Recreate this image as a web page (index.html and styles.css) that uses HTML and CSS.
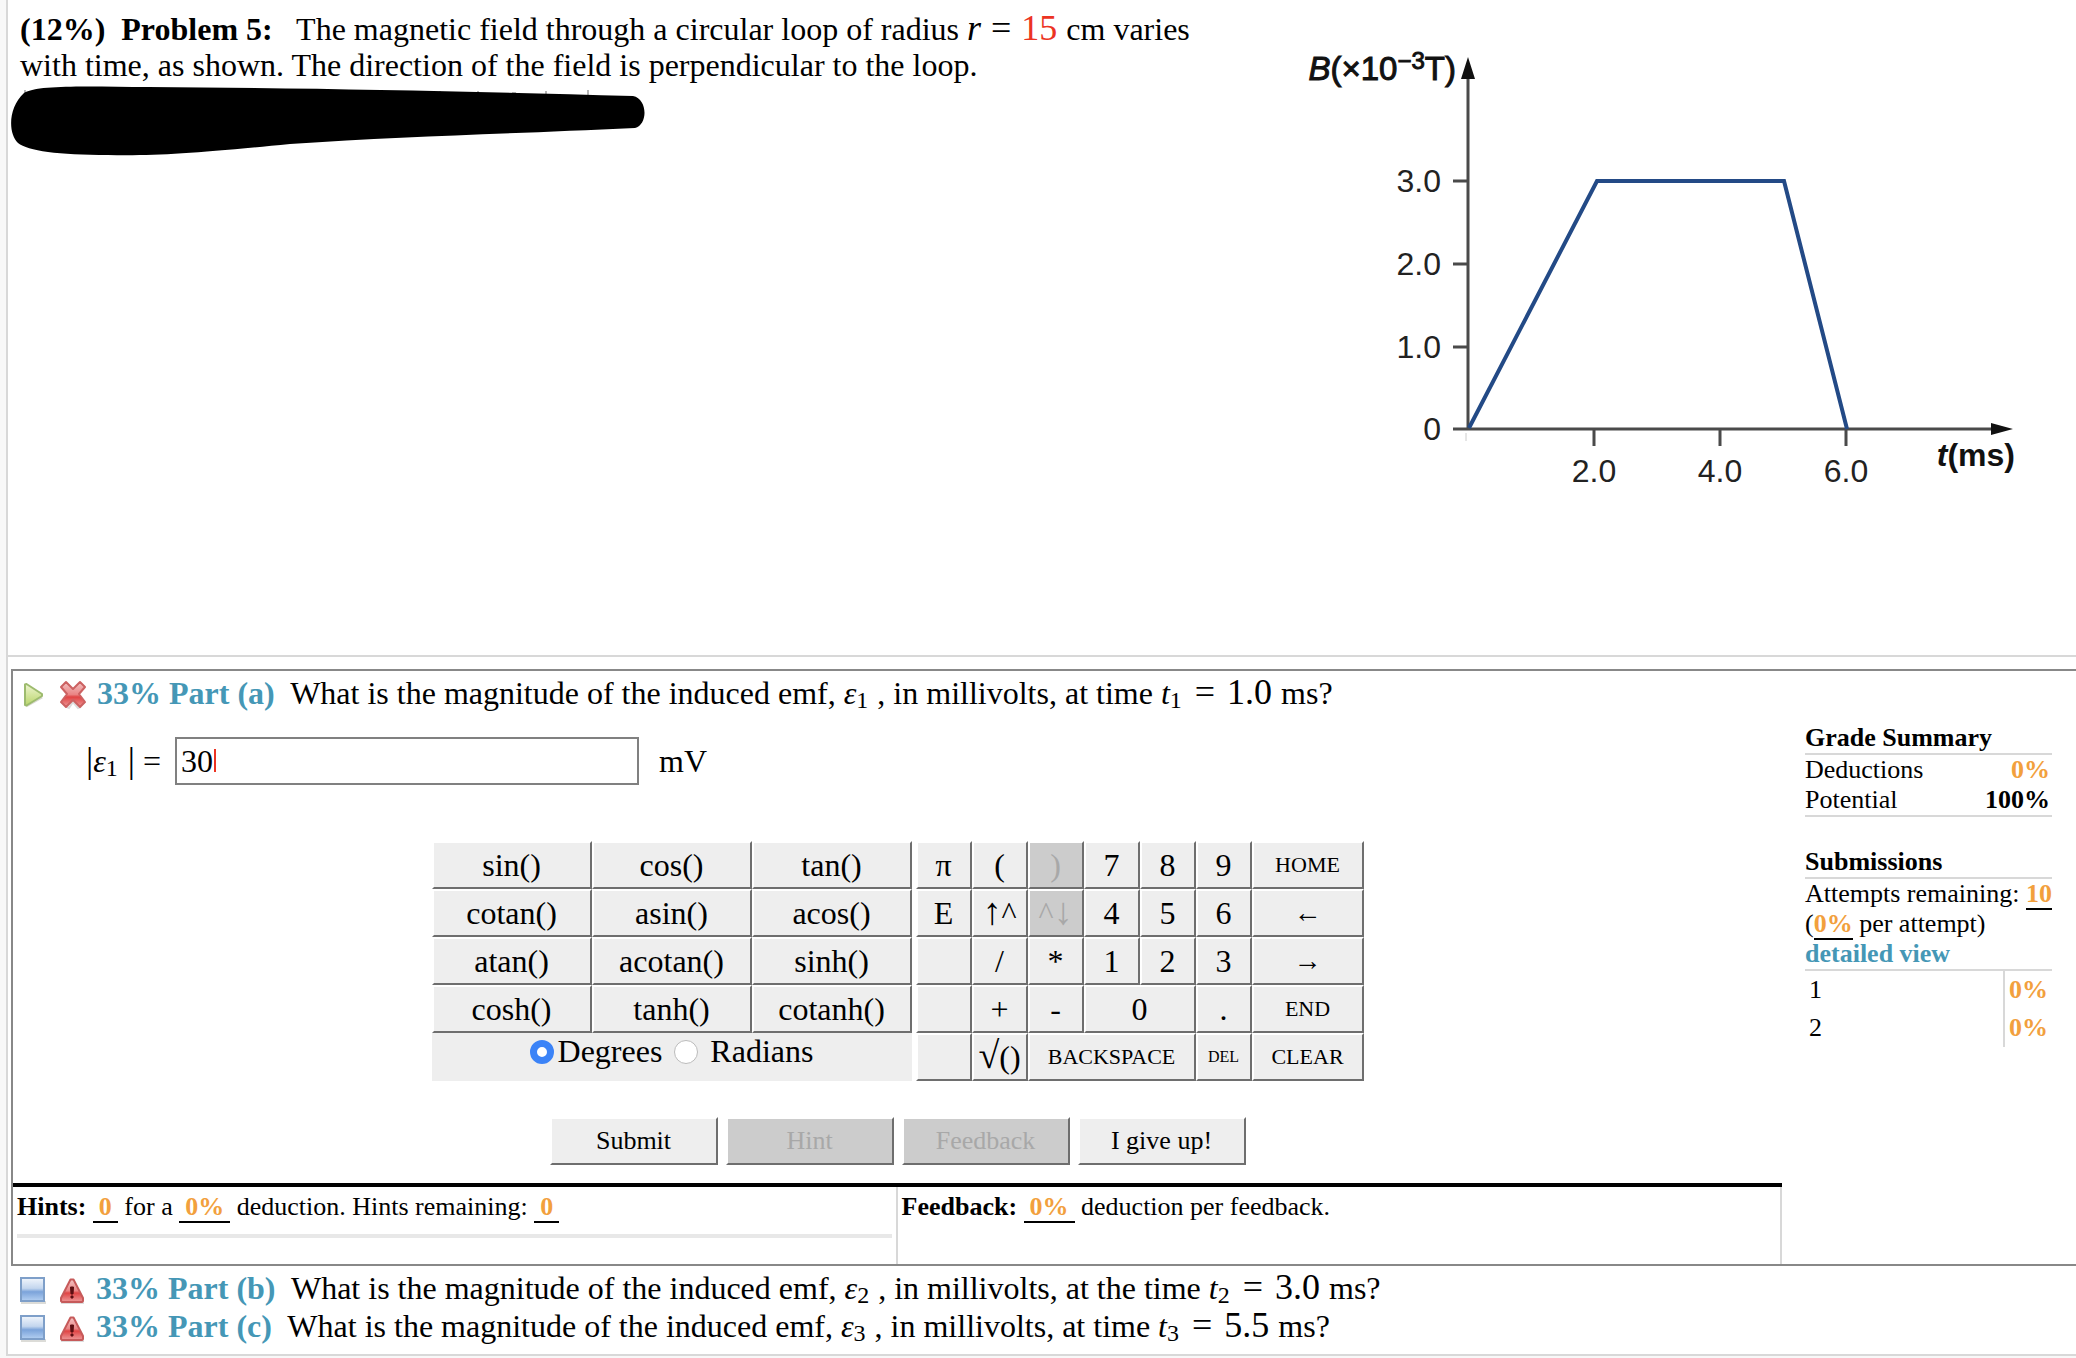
FILE: index.html
```html
<!DOCTYPE html>
<html lang="en">

<head>
    <meta charset="UTF-8">
    <meta name="viewport" content="width=device-width, initial-scale=1.0">
    <title>Problem 5</title>
    <link rel="stylesheet" href="styles.css">
</head>

<body>
    <!-- shared icons -->
    <svg class="defs" width="0" height="0" aria-hidden="true">
        <defs>
            <linearGradient id="green" x1="0" y1="0" x2="0" y2="1">
                <stop offset="0" stop-color="#eef4d0" />
                <stop offset="1" stop-color="#b9d66b" />
            </linearGradient>
            <linearGradient id="red" x1="0" y1="0" x2="0" y2="1">
                <stop offset="0" stop-color="#f3c4c4" />
                <stop offset="0.5" stop-color="#ea8484" />
                <stop offset="0.6" stop-color="#e04444" />
                <stop offset="1" stop-color="#ee9a9a" />
            </linearGradient>
            <linearGradient id="blue" x1="0" y1="0" x2="0" y2="1">
                <stop offset="0" stop-color="#f2f6fc" />
                <stop offset="0.45" stop-color="#c3d6ee" />
                <stop offset="0.6" stop-color="#7ba3da" />
                <stop offset="1" stop-color="#b4d0f2" />
            </linearGradient>
            <symbol id="play" viewBox="0 0 26 30">
                <path d="M5 26L21 17" stroke="#d8d8d0" stroke-width="3" fill="none" />
                <path d="M4 4.500L5.500 4L21 14V16L5.500 25.500L4 25Z" fill="url(#green)" stroke="#9dbb6e" stroke-width="2" stroke-linejoin="round" />
            </symbol>
            <symbol id="cross" viewBox="0 0 28 30">
                <path d="M8 27L10 28L14 22L19 28L22 27" fill="none" stroke="#ddd" stroke-width="2" />
                <path d="M7 2L14 9L21 2L26 7L20 14L26 22L21 27L14 20L7 27L2 22L8 14L2 7Z" fill="url(#red)" stroke="#cc6262" stroke-width="2" stroke-linejoin="round" />
            </symbol>
            <symbol id="square" viewBox="0 0 28 30">
                <rect x="2" y="26" width="25" height="3" fill="#dcdcd8" />
                <rect x="2" y="3" width="23" height="23" fill="url(#blue)" stroke="#7e9fc9" stroke-width="2" />
            </symbol>
            <symbol id="warning" viewBox="0 0 28 30">
                <path d="M3 28H26" stroke="#ddd" stroke-width="2" />
                <path d="M12.500 4.500H15.500L25 23V26L24 27H4L3 26V23Z" fill="url(#red)" stroke="#c65a5a" stroke-width="2" stroke-linejoin="round" />
                <path d="M12.500 12H15.500L15 19H13ZM13 21H15V23H13Z" fill="#5d0f12" stroke="#5d0f12" />
            </symbol>
        </defs>
    </svg>

    <main class="page">
        <section class="problem">
            <div class="statement">
                <p><b>(12%)&nbsp; Problem 5:</b>&nbsp;&nbsp; The magnetic field through a circular loop of radius
                    <span class="math"><i>r</i><span class="eq">=</span><span class="value">15</span>&nbsp;<small>cm</small></span> varies<br>
                    with time, as shown. The direction of the field is perpendicular to the loop.</p>
                <svg class="marker" width="640" height="76" viewBox="0 0 640 76" aria-hidden="true">
                    <path d="M17 7v6M432 8v6M470 8v6M538 8v5M580 7v7M504 10h4" stroke="#b5b5b5" stroke-width="2" />
                    <path d="M16 10C30 1 90 4 140 4C300 5 450 8 625 13C640 16 640 42 627 45C500 51 400 53 282 61C190 70 150 73 100 72C50 72 20 68 10 60C0 50 0 25 16 10Z" fill="#000" />
                </svg>
            </div>
            <svg class="graph" viewBox="0 0 750 480" role="img" aria-label="Magnetic field against time">
                <g stroke="#4a4a4a" stroke-width="3" fill="none">
                    <path d="M178 45V399M163 399H705" />
                    <path d="M163 151H178M163 234H178M163 317H178M304 399V416M430 399V416M556 399V416" />
                </g>
                <path d="M176 403V411" stroke="#ccc" />
                <path d="M178 27L185 49H171ZM723 399L701 393V405Z" fill="#111" />
                <path d="M179 398L307 151H494L557 399" fill="none" stroke="#234a86" stroke-width="4" />
                <g class="ticks">
                    <text x="151" y="162" text-anchor="end">3.0</text>
                    <text x="151" y="245" text-anchor="end">2.0</text>
                    <text x="151" y="328" text-anchor="end">1.0</text>
                    <text x="151" y="410" text-anchor="end">0</text>
                    <text x="304" y="452" text-anchor="middle">2.0</text>
                    <text x="430" y="452" text-anchor="middle">4.0</text>
                    <text x="556" y="452" text-anchor="middle">6.0</text>
                </g>
                <text class="axis" x="166" y="50" text-anchor="end"><tspan font-style="italic">B</tspan>(×10<tspan class="power" dy="-11">−3</tspan><tspan dy="11">T)</tspan></text>
                <text class="axis-bold" x="725" y="436" text-anchor="end"><tspan font-style="italic">t</tspan>(ms)</text>
            </svg>
        </section>

        <section class="part-box">
            <h2 class="part">
                <svg class="icon"><use href="#play" /></svg>
                <svg class="icon"><use href="#cross" /></svg>
                <span><b>33% Part (a)</b>&nbsp; What is the magnitude of the induced emf, <i>ε</i><sub>1</sub> , in millivolts, at time
                    <i>t</i><sub>1</sub><span class="math"><span class="eq">=</span>1.0&nbsp;</span>ms?</span>
            </h2>
            <div class="columns">
                <div class="work">
                    <div class="answer">
                        <label for="answer"><span class="bar">|</span><i>ε</i><sub>1</sub><span class="bar"> |</span> =</label>
                        <div class="field">
                            <input type="text" id="answer" value="30" spellcheck="false">
                            <span class="caret"></span>
                        </div>
                        <span>mV</span>
                    </div>

                    <div class="calculator">
                        <div class="functions">
                            <button>sin()</button>
                            <button>cos()</button>
                            <button>tan()</button>
                            <button>cotan()</button>
                            <button>asin()</button>
                            <button>acos()</button>
                            <button>atan()</button>
                            <button>acotan()</button>
                            <button>sinh()</button>
                            <button>cosh()</button>
                            <button>tanh()</button>
                            <button>cotanh()</button>
                            <div class="units">
                                <input type="radio" name="unit" id="deg" checked>
                                <label for="deg">Degrees</label>
                                <input type="radio" name="unit" id="rad">
                                <label for="rad">&nbsp;Radians</label>
                            </div>
                        </div>
                        <div class="keys">
                            <button>π</button>
                            <button>(</button>
                            <button disabled>)</button>
                            <button>7</button>
                            <button>8</button>
                            <button>9</button>
                            <button class="small">HOME</button>
                            <button>E</button>
                            <button><span class="arrow">↑</span>^</button>
                            <button disabled>^<span class="arrow">↓</span></button>
                            <button>4</button>
                            <button>5</button>
                            <button>6</button>
                            <button class="move">←</button>
                            <button aria-label="blank"></button>
                            <button>/</button>
                            <button>*</button>
                            <button>1</button>
                            <button>2</button>
                            <button>3</button>
                            <button class="move">→</button>
                            <button aria-label="blank"></button>
                            <button>+</button>
                            <button>-</button>
                            <button class="two">0</button>
                            <button>.</button>
                            <button class="small">END</button>
                            <button aria-label="blank"></button>
                            <button><span class="arrow">√</span>()</button>
                            <button class="small three">BACKSPACE</button>
                            <button class="tiny">DEL</button>
                            <button class="small">CLEAR</button>
                        </div>
                    </div>

                    <div class="actions">
                        <button>Submit</button>
                        <button disabled>Hint</button>
                        <button disabled>Feedback</button>
                        <button>I give up!</button>
                    </div>

                    <div class="help">
                        <div class="hints">
                            <p><b>Hints:</b> <span class="score">0</span> for a <span class="score">0%</span> deduction. Hints remaining: <span class="score">0</span></p>
                            <hr>
                        </div>
                        <div class="feedback">
                            <p><b>Feedback:</b> <span class="score">0%</span> deduction per feedback.</p>
                        </div>
                    </div>
                </div>

                <aside class="summary">
                    <h3>Grade Summary</h3>
                    <table class="grades">
                        <tr><td>Deductions</td><td class="orange">0%</td></tr>
                        <tr><td>Potential</td><td class="total">100%</td></tr>
                    </table>
                    <h3>Submissions</h3>
                    <p>Attempts remaining: <span class="count">10</span></p>
                    <p>(<span class="count">0%</span> per attempt)</p>
                    <a href="#">detailed view</a>
                    <table class="attempts">
                        <tr><td>1</td><td class="orange">0%</td></tr>
                        <tr><td>2</td><td class="orange">0%</td></tr>
                    </table>
                </aside>
            </div>
        </section>

        <section class="more">
            <h2 class="part">
                <svg class="icon"><use href="#square" /></svg>
                <svg class="icon"><use href="#warning" /></svg>
                <span><b>33% Part (b)</b>&nbsp; What is the magnitude of the induced emf, <i>ε</i><sub>2</sub> , in millivolts, at the time
                    <i>t</i><sub>2</sub><span class="math"><span class="eq">=</span>3.0&nbsp;</span>ms?</span>
            </h2>
            <h2 class="part">
                <svg class="icon"><use href="#square" /></svg>
                <svg class="icon"><use href="#warning" /></svg>
                <span><b>33% Part (c)</b>&nbsp; What is the magnitude of the induced emf, <i>ε</i><sub>3</sub> , in millivolts, at time
                    <i>t</i><sub>3</sub><span class="math"><span class="eq">=</span>5.5&nbsp;</span>ms?</span>
            </h2>
        </section>
    </main>
</body>

</html>
```
FILE: styles.css
```css
* {
    margin: 0;
    padding: 0;
    box-sizing: border-box;
}

body {
    background: #f8f8f8;
    color: #000;
    font-family: "Liberation Serif", "Times New Roman", serif;
    font-size: 32px;
    line-height: 36px;
}

button,
input {
    font-family: inherit;
    font-size: inherit;
    color: inherit;
}

.defs {
    display: block;
}

.page {
    margin-left: 6px;
    border-left: 2px solid #d8d8d8;
    border-bottom: 2px solid #d8d8d8;
    background: #fff;
}

/* problem text and graph */
.problem {
    display: grid;
    grid-template-columns: 62% 1fr;
    min-height: 657px;
    border-bottom: 2px solid #d8d8d8;
}

.statement {
    padding-top: 11px;
}

.statement p {
    padding: 0 60px 0 12px;
}

.marker {
    display: block;
}

.graph {
    width: 750px;
    max-width: 100%;
    height: 480px;
    margin-top: 30px;
    font-family: "Liberation Sans", Arial, sans-serif;
    font-size: 32px;
}

.ticks {
    fill: #222;
}

.axis {
    fill: #111;
    font-size: 33px;
    stroke: #111;
    stroke-width: 1px;
}

.axis-bold {
    fill: #111;
    font-weight: bold;
}

.power {
    font-size: 24px;
}

.math {
    font-size: 36px;
    line-height: 0;
}

.math small {
    font-size: 32px;
}

.eq {
    margin: 0 10px;
}

.part .eq {
    margin: 0 12px;
}

.value {
    color: #ec3323;
}

sub {
    margin-right: 1px;
    font-size: 24px;
    line-height: 0;
    vertical-align: -4px;
}

/* parts */
.part {
    display: flex;
    align-items: center;
    font-size: 32px;
    font-weight: normal;
    line-height: 38px;
}

.part b {
    color: #4597b6;
}

.icon {
    width: 28px;
    height: 30px;
    margin: 4px 11px 0 0;
    flex-shrink: 0;
}

.part .icon + .icon {
    margin-right: 10px;
}

.part-box {
    margin: 12px 0 0 3px;
    border: 2px solid #888;
    border-right: none;
}

.part-box .part {
    padding: 3px 0 0 7px;
}

.columns {
    display: grid;
    grid-template-columns: 1fr 294px;
}

.work {
    padding-top: 25px;
}

.answer {
    display: flex;
    align-items: center;
    padding-left: 73px;
}

.answer label {
    margin-right: 14px;
}

.bar {
    font-size: 36px;
    line-height: 0;
}

.field {
    position: relative;
    width: 464px;
    margin-right: 20px;
}

.field input {
    display: block;
    width: 100%;
    height: 48px;
    padding: 0 4px;
    border: 2px solid #808080;
    outline: none;
    background: #fff;
}

.caret {
    position: absolute;
    left: 39px;
    top: 12px;
    width: 2px;
    height: 23px;
    background: #ec3323;
}

.calculator {
    display: flex;
    justify-content: center;
    gap: 4px;
    margin-top: 56px;
}

.functions {
    display: grid;
    grid-template-columns: repeat(3, 160px);
    grid-auto-rows: 48px;
    background: #eee;
}

.keys {
    display: grid;
    grid-template-columns: repeat(6, 56px) 112px;
    grid-auto-rows: 48px;
}

button {
    border: 2px solid;
    border-color: #fff #6e6e6e #6e6e6e #fff;
    background: #eee;
    white-space: nowrap;
    cursor: pointer;
}

button:disabled {
    background: #ccc;
    color: #a8a8a8;
    cursor: default;
}

.keys .small {
    font-size: 22px;
}

.keys .tiny {
    font-size: 16px;
}

.keys .move {
    font-size: 28px;
}

.arrow {
    font-size: 38px;
    line-height: 0;
}

.two {
    grid-column: span 2;
}

.three {
    grid-column: span 3;
}

.units {
    grid-column: 1 / -1;
    display: flex;
    justify-content: center;
    align-items: flex-start;
}

.units input {
    appearance: none;
    width: 24px;
    height: 24px;
    margin: 7px 4px 0 0;
    border: 1px solid #bbb;
    border-radius: 50%;
    background: #fff;
}

.units input:checked {
    border: 7px solid #3b83f7;
}

.units label {
    margin-right: 12px;
}

.units label:last-child {
    margin-right: 0;
}

.actions {
    display: flex;
    justify-content: center;
    gap: 8px;
    margin: 36px 0 18px;
}

.actions button {
    width: 168px;
    height: 48px;
    font-size: 26px;
}

.help {
    display: grid;
    grid-template-columns: 1fr 1fr;
    min-height: 81px;
    border-top: 4px solid #000;
    font-size: 26px;
    line-height: 30px;
}

.hints,
.feedback {
    padding: 5px 4px 0;
    border-right: 2px solid #d8d8d8;
}

.hints hr {
    height: 4px;
    margin-top: 12px;
    border: none;
    background: #e8e8e8;
}

.score,
.count {
    padding: 0 6px;
    border-bottom: 2px solid #000;
    color: #f2a03d;
    font-weight: bold;
}

.count {
    padding: 0;
}

/* grade summary */
.summary {
    padding: 11px 24px 0 23px;
    font-size: 26px;
    line-height: 30px;
}

.summary h3 {
    font-size: 26px;
    border-bottom: 2px solid #d8d8d8;
}

.summary a {
    display: block;
    color: #4597b6;
    font-weight: bold;
    text-decoration: none;
}

.summary table {
    width: 100%;
    border-collapse: collapse;
}

.summary .grades {
    margin-bottom: 30px;
    border-bottom: 2px solid #d8d8d8;
}

.grades td:last-child {
    padding-right: 2px;
    text-align: right;
    font-weight: bold;
}

.summary .attempts {
    border-top: 2px solid #d8d8d8;
    line-height: 38px;
}

.attempts td:first-child {
    padding-left: 4px;
}

.attempts td:last-child {
    width: 48px;
    padding-left: 4px;
    border-left: 2px solid #d8d8d8;
    font-weight: bold;
}

.orange {
    color: #f2a03d;
}

.more {
    padding: 3px 0 9px 11px;
}
```
